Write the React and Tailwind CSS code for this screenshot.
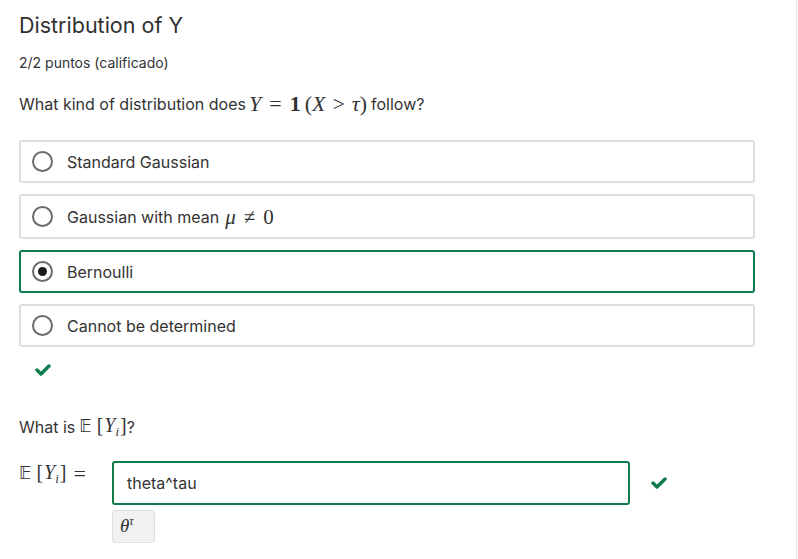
import React from "react";

const M = { fontFamily: '"Liberation Serif", "DejaVu Serif", serif' };
const BB = { fontFamily: '"DejaVu Sans", "DejaVu Serif", serif' };

function Radio({ checked }) {
  return (
    <span className="flex h-[21px] w-[21px] shrink-0 items-center justify-center rounded-full border-2 border-[#6b6b6b] bg-white">
      {checked && <span className="h-[9px] w-[9px] rounded-full bg-[#1a1a1a]" />}
    </span>
  );
}

function Option({ checked, h, children }) {
  return (
    <div
      className={`flex items-center gap-[14px] rounded-[3px] border-2 pl-[11px] ${h} ${
        checked ? "border-[#0d7d4d]" : "border-[#dedede]"
      }`}
    >
      <Radio checked={checked} />
      <span className="flex items-center text-[16px] leading-[22px] text-[#333]">{children}</span>
    </div>
  );
}

function Check({ className }) {
  return (
    <svg className={className} width="16" height="12" viewBox="0 0 16 12">
      <polyline points="2,6 6,10 14,2" fill="none" stroke="#0d7d4d" strokeWidth="3.4" strokeLinecap="round" strokeLinejoin="round" />
    </svg>
  );
}

function EY() {
  return (
    <span className="text-[20px] leading-[24px] text-[#333]" style={M}>
      <span style={BB} className="text-[17px]">𝔼</span>
      <span className="ml-[5px]">[</span>
      <i className="ml-[1px]">Y</i>
      <i className="relative top-[4px] text-[13px]">i</i>
      <span className="ml-[1px]">]</span>
    </span>
  );
}

export default function App() {
  return (
    <div className="h-[559px] w-[797px] border-r border-[#e8e8e8] bg-white" style={{ fontFamily: 'Inter, "Noto Sans", sans-serif' }}>
      <div className="pl-[19px] pr-[41px] pt-[10px]">
        <h2 className="text-[21.5px] leading-[30px] text-[#313131]">Distribution of Y</h2>
        <div className="mt-[13px] text-[14px] leading-[20px] text-[#333]">2/2 puntos (calificado)</div>
        <div className="mt-[20px] flex items-center text-[16px] leading-[22px] text-[#333]">
          <span>What kind of distribution does</span>
          <span className="ml-[3px] mr-[4px] text-[22px] leading-[22px]" style={M}>
            <i>Y</i>
            <span className="mx-[8px]">=</span>
            <b>1</b>
            <span className="ml-[4px]">(</span>
            <i>X</i>
            <span className="mx-[7px]">&gt;</span>
            <i>τ</i>
            <span>)</span>
          </span>
          <span>follow?</span>
        </div>
        <div className="mt-[25px] flex flex-col gap-[11px]">
          <Option h="h-[43px]">Standard Gaussian</Option>
          <Option h="h-[45px]">
            Gaussian with mean
            <span className="ml-[6px] text-[21px] leading-[22px]" style={M}>
              <i>μ</i>
              <span className="mx-[8px]">≠</span>
              <span>0</span>
            </span>
          </Option>
          <Option h="h-[43px]" checked>
            Bernoulli
          </Option>
          <Option h="h-[43px]">Cannot be determined</Option>
        </div>
        <div className="mt-[17px] pl-[16px]">
          <Check className="block" />
        </div>
        <div className="mt-[37px] flex items-center text-[16px] leading-[22px] text-[#333]">
          <span className="mr-[4px]">What is</span>
          <EY />
          <span>?</span>
        </div>
        <div className="mt-[20px] flex items-start">
          <div className="flex w-[93px] items-center leading-[24px]">
            <EY />
            <span className="ml-[7px] text-[22px] text-[#333]" style={M}>=</span>
          </div>
          <div className="flex flex-col">
            <div className="mt-[1px] flex items-center">
              <div className="flex h-[44px] w-[518px] items-center rounded-[3px] border-2 border-[#0d7d4d] pl-[13px] text-[16px] text-[#333]">
                theta^tau
              </div>
              <Check className="ml-[21px]" />
            </div>
            <div className="mt-[5px] flex h-[33px] w-[43px] items-center rounded-[3px] border border-[#e0e0e0] bg-[#f1f1f1] pl-[7px] text-[#333]" style={M}>
              <i className="text-[19px]">θ</i>
              <i className="relative top-[-6px] text-[12px]">τ</i>
            </div>
          </div>
        </div>
      </div>
    </div>
  );
}
